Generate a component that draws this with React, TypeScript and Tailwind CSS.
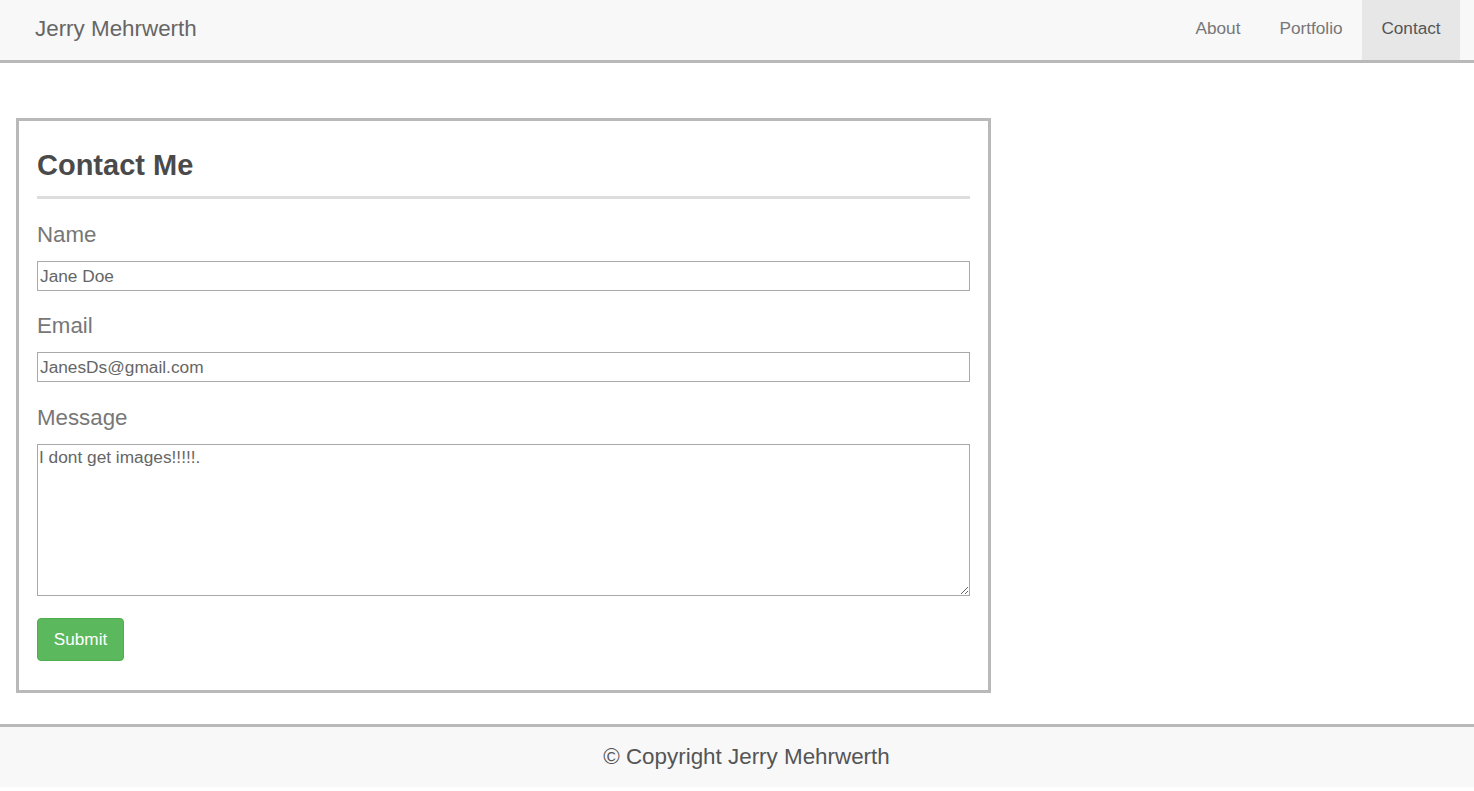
import React from "react";

export default function App() {
  return (
    <div className="min-h-[791px] bg-white font-['Liberation_Sans',Arial,sans-serif]">
      <nav className="flex h-[63px] items-stretch justify-between border-b-[3px] border-[#b9b9b9] bg-[#f8f8f8]">
        <div className="flex items-center pl-[35px] pb-[2px] text-[22.4px] text-[#666]">Jerry Mehrwerth</div>
        <ul className="mr-[14px] flex items-stretch text-[17.2px]">
          <li className="flex w-[84px] items-center justify-center pb-[2px] text-[#777]">About</li>
          <li className="flex w-[102px] items-center justify-center pb-[2px] text-[#777]">Portfolio</li>
          <li className="flex w-[98px] items-center justify-center bg-[#e7e7e7] pb-[2px] text-[#555]">Contact</li>
        </ul>
      </nav>

      <div className="ml-[16px] mt-[55px] w-[975px] border-[3px] border-[#b9b9b9] px-[18px] pb-[29px] pt-[28px]">
        <h2 className="text-[29px] font-bold leading-[33px] text-[#4a4a4a]">Contact Me</h2>
        <div className="mt-[14px] h-[3px] bg-[#dddddd]" />

        <div className="mt-[23px] text-[22.3px] leading-[26px] text-[#777]">Name</div>
        <input
          readOnly
          value="Jane Doe"
          className="mt-[13px] block h-[30px] w-full border border-[#a9a9a9] px-[2px] text-[17.3px] text-[#666] outline-none"
        />

        <div className="mt-[22px] text-[22.3px] leading-[26px] text-[#777]">Email</div>
        <input
          readOnly
          value="JanesDs@gmail.com"
          className="mt-[13px] block h-[30px] w-full border border-[#a9a9a9] px-[2px] text-[17.3px] text-[#666] outline-none"
        />

        <div className="mt-[23px] text-[22.3px] leading-[26px] text-[#777]">Message</div>
        <textarea
          readOnly
          value="I dont get images!!!!!."
          className="mt-[13px] block h-[152px] w-full resize border border-[#a9a9a9] px-[1px] pt-[2px] text-[17.3px] leading-[20px] text-[#666] outline-none"
        />

        <button className="mt-[22px] flex h-[43px] w-[87px] items-center justify-center rounded-[4px] border border-[#4cae4c] bg-[#5cb85c] text-[17.2px] text-white">
          Submit
        </button>
      </div>

      <footer className="mt-[31px] flex h-[63px] items-center justify-center border-t-[3px] border-[#b9b9b9] bg-[#f8f8f8] pl-[19px] text-[22.4px] text-[#555]">
        © Copyright Jerry Mehrwerth
      </footer>
    </div>
  );
}
